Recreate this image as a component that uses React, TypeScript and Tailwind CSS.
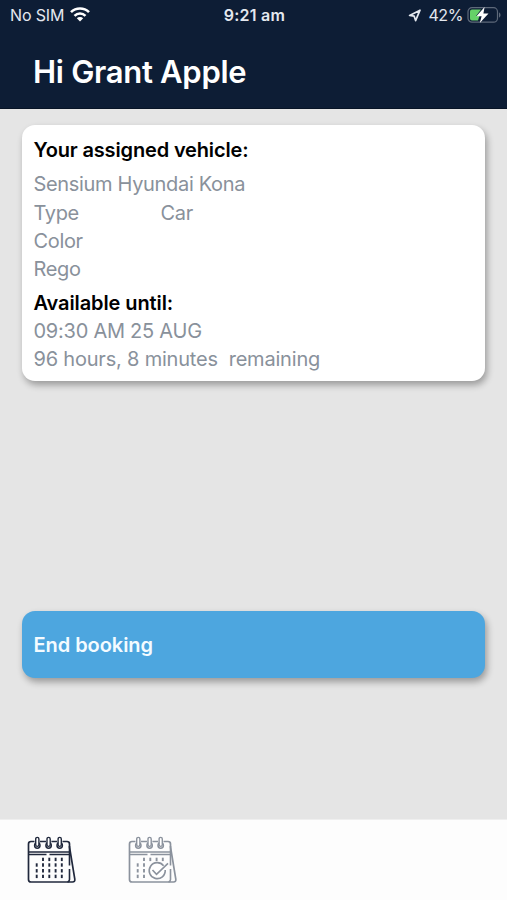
import { clsx } from "clsx";

const RING_X = [10.3, 21.6, 32.7];
const DAY_COLS = [9.7, 16, 22.3, 28.6, 34.8];
const DAY_ROWS = [23.4, 29, 34.8, 40.4];

interface CalendarIconProps {
    checked?: boolean;
    className?: string;
}

function CalendarIcon({ checked, className }: CalendarIconProps) {
    // Days hidden behind the check badge
    const isVisible = (col: number, row: number) => {
        if (row === 0) return col > 0;
        return !checked || col < 2;
    };

    return (
        <svg viewBox="0 0 50 48" fill="none" stroke="currentColor" className={clsx("w-[50px] h-12", className)}>
            {/* Front page and the page behind it */}
            <path
                d="M7.5 5.5H4Q1.5 5.5 1.5 8V43.5Q1.5 46 4 46H45.5Q48.2 46 47.8 43.2L42.5 11V8Q42.5 5.5 40 5.5H35.5M13 5.5H19M24.4 5.5H30"
                strokeWidth="1.7"
                strokeLinejoin="round"
            />
            <path d="M42.5 10V29.5M42.5 33V43.5Q42.5 45.5 40.5 46" strokeWidth="1.6" />
            <path d="M1.5 16H42.5M1.5 18.6H19.5M22.5 18.6H42.5" strokeWidth="1.5" />
            {/* Binder rings */}
            {RING_X.map((x) => (
                <g key={x}>
                    <circle cx={x} cy="9.5" r="2.7" fill="#fff" strokeWidth="1.5" />
                    <rect x={x - 1.6} y="1.4" width="3.2" height="9" rx="1.6" fill="#fff" strokeWidth="1.4" />
                </g>
            ))}
            {/* Days */}
            {DAY_ROWS.map((y, row) =>
                DAY_COLS.map(
                    (x, col) =>
                        isVisible(col, row) && (
                            <path key={`${row}-${col}`} d={`M${x} ${y - 1.7}v3.4`} strokeWidth="1.9" />
                        )
                )
            )}
            {checked && (
                <g strokeWidth="1.6">
                    <circle cx="29.3" cy="35" r="9.2" fill="#fff" stroke="none" />
                    <path d="M35.6 29.8A8 8 0 1 0 37.2 34" />
                    <path d="M24.5 34L28.5 38.3L40 27.3" />
                </g>
            )}
        </svg>
    );
}

function StatusBar() {
    return (
        <div className="grid grid-cols-3 items-center h-[30px] pl-[10px] pr-[6px] text-[16px] text-[#e4e8ef]">
            <div className="flex items-center gap-[6px]">
                <span className="tracking-[-0.15px] whitespace-nowrap">No SIM</span>
                <svg viewBox="0 0 20 15" className="w-5 h-[15px] -mt-[2px]" fill="none" stroke="#fff" strokeWidth="2.6">
                    <path d="M1 5.2a12.8 12.8 0 0 1 18 0" />
                    <path d="M4.5 8.8a7.8 7.8 0 0 1 11 0" />
                    <path d="M10 14.6L6.8 11.3a4.6 4.6 0 0 1 6.4 0z" fill="#fff" stroke="none" />
                </svg>
            </div>
            <div className="-ml-[2px] text-center font-semibold tracking-[0.25px]">9:21 am</div>
            <div className="flex items-center justify-end">
                <svg viewBox="0 0 13 13" className="w-[13px] h-[13px] mr-[7px]" fill="none" stroke="currentColor" strokeWidth="1.7" strokeLinejoin="round">
                    <path d="M12 1.2L1.6 6.4L6.2 7.2L7.6 11.6Z" />
                </svg>
                <span className="tracking-[-0.4px] mr-1">42%</span>
                <svg viewBox="0 0 34 18" className="w-[34px] h-[18px] -mt-px shrink-0">
                    <rect x="1" y="1.7" width="29.5" height="14.5" rx="4" fill="none" stroke="#5e697a" strokeWidth="1.2" />
                    <path d="M32 6.3Q33.6 7.2 33.6 9T32 11.7Z" fill="#5e697a" />
                    <path d="M5 3.5H14L9 10H12.5L11 14.5H5Q3 14.5 3 12.5V5.5Q3 3.5 5 3.5Z" fill="#65d168" />
                    <path d="M17.6 1L9.4 10.3H14.6L12.8 17L21.5 7.6H16.4Z" fill="#fff" />
                </svg>
            </div>
        </div>
    );
}

interface DetailRowProps {
    label: string;
    value?: string;
}

function DetailRow({ label, value }: DetailRowProps) {
    return (
        <div className="flex">
            <span className="w-[127px]">{label}</span>
            <span>{value}</span>
        </div>
    );
}

export default function App() {
    return (
        <div className="flex flex-col w-full h-[900px] bg-[#e5e5e5] font-['Inter','Liberation_Sans',sans-serif]">
            <header className="h-[109px] bg-[#0d1d35] border-b border-[#071426] shrink-0">
                <StatusBar />
                <h1 className="pl-[33px] pt-[22px] text-[31px] leading-10 font-semibold tracking-[-0.3px] text-white">
                    Hi Grant Apple
                </h1>
            </header>

            <main className="flex-1 px-[22px] pt-4">
                {/* Vehicle card */}
                <section className="h-64 rounded-[13px] bg-white pl-[11.5px] pr-3 pt-[11px] text-[20px] leading-[28.3px] tracking-[-0.35px] text-[#89919b] shadow-[2px_4px_7px_rgba(0,0,0,0.33)]">
                    <h2 className="mb-[6px] font-semibold text-black tracking-[-0.15px]">Your assigned vehicle:</h2>
                    <p className="tracking-[-0.33px]">Sensium Hyundai Kona</p>
                    <DetailRow label="Type" value="Car" />
                    <DetailRow label="Color" />
                    <DetailRow label="Rego" />
                    <h2 className="mt-[5.2px] font-semibold text-black tracking-[-0.1px]">Available until:</h2>
                    <p className="tracking-[-0.25px]">09:30 AM 25 AUG</p>
                    <p className="whitespace-pre tracking-[-0.2px]">96 hours, 8 minutes  remaining</p>
                </section>

                <button className="mt-[230px] block w-full h-[67px] rounded-[13px] bg-[#4da6df] pl-[11.5px] pr-3 text-left text-[20px] font-semibold tracking-[-0.05px] text-[#f4fbff] shadow-[2px_4px_7px_rgba(0,0,0,0.33)]">
                    End booking
                </button>
            </main>

            <nav className="flex items-start h-[81px] gap-[51px] bg-[#fdfdfd] border-t border-[#efefef] pl-[27px] pt-4 shrink-0">
                <CalendarIcon className="text-[#20283c]" />
                <CalendarIcon checked className="text-[#8b929d]" />
            </nav>
        </div>
    );
}
